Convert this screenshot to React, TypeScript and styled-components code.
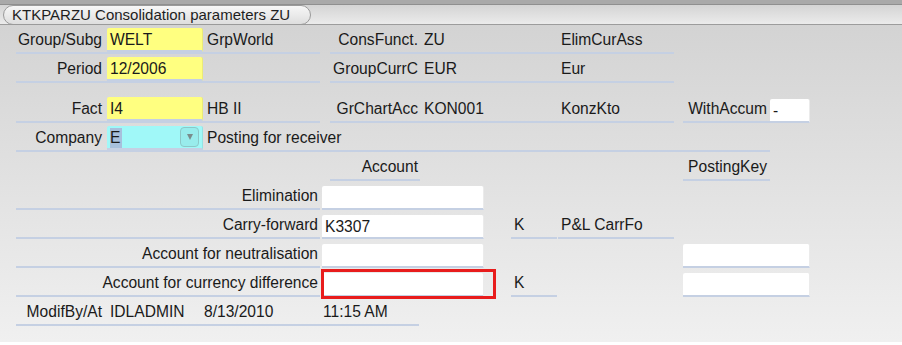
import React from "react";
import styled, { createGlobalStyle } from "styled-components";

const Global = createGlobalStyle`
  html, body { margin: 0; padding: 0; background: #ffffff; }
  body { font-family: "Liberation Sans", Arial, sans-serif; }
`;

const Screen = styled.div`
  width: 902px;
  height: 342px;
  background: linear-gradient(to bottom, #d1d1d1 0%, #e2e2e2 55%, #f0f0f0 100%);
  display: flex;
  flex-direction: column;
  color: #1a1a1a;
  font-size: 15.6px;
`;

const TitleBar = styled.div`
  height: 25px;
  box-sizing: border-box;
  padding-left: 3px;
  display: flex;
  align-items: flex-end;
  border-bottom: 1px solid #9c9c9c;
  background: linear-gradient(
    to bottom,
    #a9a9a9 0px,
    #a9a9a9 4px,
    #8f8f8f 4px,
    #8f8f8f 5px,
    #d4d4d4 5px,
    #ebebeb 24px
  );
`;

const Tab = styled.div`
  height: 20px;
  width: 308px;
  box-sizing: border-box;
  border: 1px solid #9a9a9a;
  border-radius: 10px;
  margin-bottom: -1px;
  background: linear-gradient(to bottom, #f7f7f7, #dedede);
  padding-left: 8px;
  font-size: 15px;
  line-height: 18px;
  color: #1e1e1e;
  white-space: nowrap;
`;

const Form = styled.div`
  display: flex;
  flex-direction: column;
  padding-left: 16px;
`;

const Row = styled.div<{ $gapTop?: number }>`
  display: flex;
  align-items: flex-end;
  height: 29px;
  margin-top: ${(p) => p.$gapTop ?? 0}px;
`;

const Group = styled.div<{ $w: number }>`
  display: flex;
  align-items: flex-end;
  width: ${(p) => p.$w}px;
  height: 29px;
  box-sizing: border-box;
  border-bottom: 2px solid #c5d0e3;
  flex-shrink: 0;
`;

const Spacer = styled.div<{ $w: number }>`
  width: ${(p) => p.$w}px;
  flex-shrink: 0;
`;

const Cell = styled.div<{ $w?: number; $align?: "left" | "right"; $pl?: number; $pr?: number }>`
  width: ${(p) => (p.$w ? `${p.$w}px` : "auto")};
  flex: ${(p) => (p.$w ? "0 0 auto" : "1 1 auto")};
  height: 27px;
  box-sizing: border-box;
  padding-top: 3px;
  padding-left: ${(p) => p.$pl ?? 0}px;
  padding-right: ${(p) => p.$pr ?? 0}px;
  line-height: 24px;
  text-align: ${(p) => p.$align ?? "left"};
  white-space: nowrap;
  overflow: visible;
`;

const Field = styled.div<{ $w: number; $bg: string; $ml?: number; $focus?: boolean }>`
  position: relative;
  width: ${(p) => p.$w}px;
  margin-left: ${(p) => p.$ml ?? 0}px;
  height: 24px;
  box-sizing: border-box;
  flex-shrink: 0;
  background: ${(p) => p.$bg};
  border-radius: 2px 2px 0 0;
  border-right: 1px solid rgba(0, 0, 0, 0.08);
  border-bottom: 2px solid #c5d0e3;
  padding-left: 3px;
  padding-right: 3px;
  line-height: 22px;
  padding-top: 1px;
  display: flex;
  align-items: center;
  justify-content: space-between;
  white-space: nowrap;
  ${(p) =>
    p.$focus &&
    `
    &::after {
      content: "";
      position: absolute;
      left: -1px;
      top: -4px;
      right: -13px;
      bottom: -4px;
      border: 3px solid #e81c1c;
    }
  `}
`;

const Selected = styled.span`
  background: #a8c0dc;
  padding: 0 2px 0 0;
  line-height: 20px;
`;

const DropButton = styled.div`
  width: 19px;
  height: 20px;
  box-sizing: border-box;
  border: 1px solid #8cc8c8;
  border-radius: 4px;
  background: #98ecec;
  display: flex;
  align-items: center;
  justify-content: center;
  margin-bottom: 1px;
`;

const Arrow = styled.div`
  width: 0;
  height: 0;
  border-left: 3px solid transparent;
  border-right: 3px solid transparent;
  border-top: 6px solid #7a8c8c;
`;

const YELLOW = "#ffff80";
const CYAN = "#a0f8f8";
const WHITE = "#ffffff";

type TopProps = {
  label: string;
  value: string;
  desc?: string;
  label2: string;
  value2: string;
  text2: string;
  gapTop?: number;
  extra?: React.ReactNode;
};

const TopRow: React.FC<TopProps> = ({ label, value, desc, label2, value2, text2, gapTop, extra }) => (
  <Row $gapTop={gapTop}>
    <Group $w={304}>
      <Cell $w={88} $align="right" $pr={2}>
        {label}
      </Cell>
      <Field $w={96} $ml={3} $bg={YELLOW}>
        {value}
      </Field>
      <Cell $w={117} $pl={4}>
        {desc}
      </Cell>
    </Group>
    <Spacer $w={10} />
    <Group $w={344}>
      <Cell $w={89} $align="right" $pr={1}>
        {label2}
      </Cell>
      <Cell $w={138} $pl={5}>
        {value2}
      </Cell>
      <Cell $w={117} $pl={4}>
        {text2}
      </Cell>
    </Group>
    {extra}
  </Row>
);

type AccProps = {
  label: string;
  value?: string;
  k?: string;
  text?: string;
  posting?: boolean;
  focus?: boolean;
};

const AccountRow: React.FC<AccProps> = ({ label, value, k, text, posting, focus }) => (
  <Row>
    <Group $w={304}>
      <Cell $w={302} $align="right" $pr={0}>
        {label}
      </Cell>
    </Group>
    <Field $w={162} $ml={2} $bg={WHITE} $focus={focus}>
      {value}
    </Field>
    <Spacer $w={27} />
    {k !== undefined ? (
      <Group $w={46}>
        <Cell $w={46} $pl={3}>
          {k}
        </Cell>
      </Group>
    ) : (
      <Spacer $w={46} />
    )}
    <Spacer $w={1} />
    {text !== undefined ? (
      <Group $w={116}>
        <Cell $w={116} $pl={3}>
          {text}
        </Cell>
      </Group>
    ) : (
      <Spacer $w={116} />
    )}
    <Spacer $w={9} />
    {posting && <Field $w={127} $bg={WHITE} />}
  </Row>
);

export default function App() {
  return (
    <>
      <Global />
      <Screen>
        <TitleBar>
          <Tab>KTKPARZU Consolidation parameters ZU</Tab>
        </TitleBar>
        <Form>
          <TopRow
            label="Group/Subg"
            value="WELT"
            desc="GrpWorld"
            label2="ConsFunct."
            value2="ZU"
            text2="ElimCurAss"
          />
          <TopRow label="Period" value="12/2006" label2="GroupCurrC" value2="EUR" text2="Eur" />
          <TopRow
            gapTop={11}
            label="Fact"
            value="I4"
            desc="HB II"
            label2="GrChartAcc"
            value2="KON001"
            text2="KonzKto"
            extra={
              <>
                <Spacer $w={9} />
                <Group $w={87}>
                  <Cell $w={87} $align="right" $pr={3}>
                    WithAccum
                  </Cell>
                </Group>
                <Field $w={40} $bg={WHITE}>
                  -
                </Field>
              </>
            }
          />
          <Row>
            <Group $w={754}>
              <Cell $w={88} $align="right" $pr={2}>
                Company
              </Cell>
              <Field $w={96} $ml={3} $bg={CYAN}>
                <Selected>E</Selected>
                <DropButton>
                  <Arrow />
                </DropButton>
              </Field>
              <Cell $pl={4}>Posting for receiver</Cell>
            </Group>
          </Row>
          <Row>
            <Spacer $w={314} />
            <Group $w={90}>
              <Cell $w={90} $align="right" $pr={2}>
                Account
              </Cell>
            </Group>
            <Spacer $w={263} />
            <Group $w={87}>
              <Cell $w={87} $align="right" $pr={3}>
                PostingKey
              </Cell>
            </Group>
          </Row>
          <AccountRow label="Elimination" />
          <AccountRow label="Carry-forward" value="K3307" k="K" text="P&L CarrFo" />
          <AccountRow label="Account for neutralisation" posting />
          <AccountRow label="Account for currency difference" k="K" posting focus />
          <Row>
            <Group $w={403}>
              <Cell $w={88} $align="right" $pr={2}>
                ModifBy/At
              </Cell>
              <Cell $w={96} $pl={6}>
                IDLADMIN
              </Cell>
              <Cell $w={119} $pl={4}>
                8/13/2010
              </Cell>
              <Cell $w={100} $pl={4}>
                11:15 AM
              </Cell>
            </Group>
          </Row>
        </Form>
      </Screen>
    </>
  );
}
